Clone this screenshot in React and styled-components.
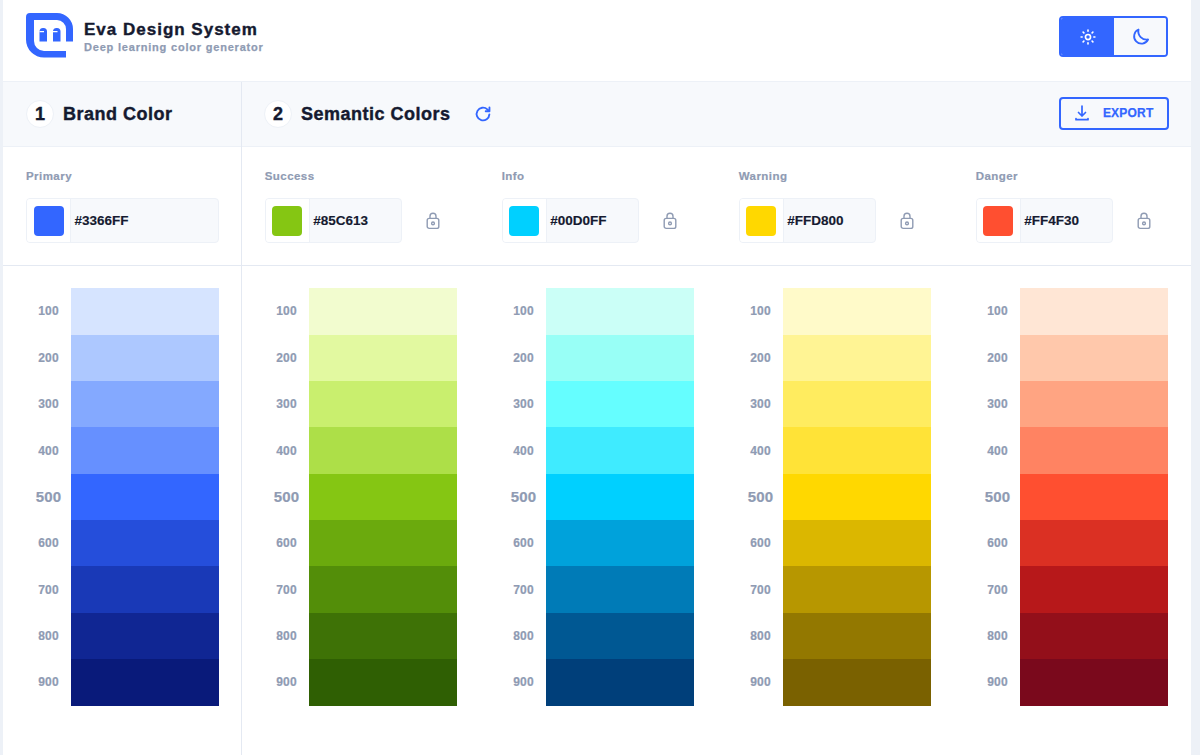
import React from 'react';
import styled, { createGlobalStyle } from 'styled-components';

const GlobalStyle = createGlobalStyle`
  html, body {
    margin: 0;
    padding: 0;
    background: #edf1f7;
    font-family: "Liberation Sans", Arial, sans-serif;
  }
  * { box-sizing: border-box; }
`;

const PALETTES = {
  Primary: {
    hex: '#3366FF',
    shades: ['#D6E4FF', '#ADC8FF', '#84A9FF', '#6690FF', '#3366FF', '#254EDB', '#1939B7', '#102693', '#091A7A'],
  },
  Success: {
    hex: '#85C613',
    shades: ['#F2FCCF', '#E2F9A0', '#C9EF6E', '#ADDF48', '#85C613', '#6BAA0D', '#538E09', '#3E7206', '#2F5F03'],
  },
  Info: {
    hex: '#00D0FF',
    shades: ['#CBFFF7', '#98FFF6', '#65FEFF', '#3FEBFF', '#00D0FF', '#00A2DB', '#007BB7', '#005893', '#003F7A'],
  },
  Warning: {
    hex: '#FFD800',
    shades: ['#FFFAC9', '#FFF494', '#FFEC5F', '#FFE337', '#FFD800', '#DBB700', '#B79700', '#937800', '#7A6100'],
  },
  Danger: {
    hex: '#FF4F30',
    shades: ['#FFE6D5', '#FFC8AB', '#FFA482', '#FF8362', '#FF4F30', '#DB3023', '#B7181A', '#930F1A', '#7A091C'],
  },
};

const SEMANTIC = ['Success', 'Info', 'Warning', 'Danger'];

const Page = styled.div`
  width: 1188px;
  height: 755px;
  margin-left: 3px;
  background: white;
  overflow: hidden;
`;

const Header = styled.header`
  height: 82px;
  padding: 13px 23px 0;
  display: flex;
  align-items: flex-start;
  justify-content: space-between;
  border-bottom: 1px solid #edf1f7;
`;

const Brand = styled.div`
  display: flex;
  align-items: flex-start;
  gap: 11px;
`;

const BrandText = styled.div`
  display: flex;
  flex-direction: column;
  padding-top: 6px;
`;

const Title = styled.div`
  font-size: 17px;
  font-weight: 700;
  color: #151a30;
  letter-spacing: 1px;
  line-height: 21px;
  -webkit-text-stroke: 0.4px #151a30;
`;

const Subtitle = styled.div`
  font-size: 11px;
  font-weight: 700;
  color: #8f9bb3;
  letter-spacing: 0.8px;
  line-height: 14px;
  -webkit-text-stroke: 0.25px #8f9bb3;
`;

const Toggle = styled.div`
  width: 109px;
  height: 41px;
  margin-top: 3px;
  display: flex;
  border: 2px solid #3366ff;
  border-radius: 4px;
  overflow: hidden;
  background: #f7f9fc;
`;

const ToggleButton = styled.div`
  flex: ${(p) => (p.$active ? '0 0 53px' : '1')};
  display: flex;
  align-items: center;
  justify-content: center;
  background: ${(p) => (p.$active ? '#3366ff' : '#f7f9fc')};
  color: ${(p) => (p.$active ? 'white' : '#3366ff')};
`;

const Columns = styled.div`
  display: grid;
  grid-template-columns: 239px 1fr;
`;

const Column = styled.section`
  min-height: 673px;
  border-right: ${(p) => (p.$divider ? '1px solid #e4e9f2' : 'none')};
`;

const SectionBar = styled.div`
  height: 65px;
  padding: ${(p) => (p.$inset ? '0 23px 0 22px' : '0 23px')};
  background: #f7f9fc;
  display: flex;
  align-items: center;
  border-bottom: 1px solid #edf1f7;
`;

const StepNumber = styled.div`
  width: 28px;
  height: 28px;
  border-radius: 50%;
  background: white;
  border: 1px solid #edf1f7;
  display: flex;
  align-items: center;
  justify-content: center;
  font-size: 18px;
  font-weight: 700;
  color: #151a30;
  -webkit-text-stroke: 0.4px #151a30;
`;

const SectionTitle = styled.h2`
  margin: 0 0 0 9px;
  font-size: 18px;
  font-weight: 700;
  color: #151a30;
  letter-spacing: 0.5px;
  -webkit-text-stroke: 0.4px #151a30;
`;

const RefreshButton = styled.div`
  margin-left: 23px;
  display: flex;
  color: #3366ff;
`;

const ExportButton = styled.div`
  margin: 0 0 2px auto;
  width: 110px;
  height: 33px;
  border: 2px solid #3366ff;
  border-radius: 4px;
  display: flex;
  align-items: center;
  justify-content: center;
  gap: 13px;
  color: #3366ff;
  font-size: 12px;
  font-weight: 700;
  letter-spacing: 0.2px;
  -webkit-text-stroke: 0.25px #3366ff;
`;

const InputRow = styled.div`
  height: 119px;
  padding: ${(p) => (p.$inset ? '0 23px 0 22.7px' : '0 23px')};
  border-bottom: 1px solid #e4e9f2;
  display: grid;
  grid-template-columns: ${(p) => (p.$inset ? 'repeat(4, 193px)' : '193px')};
  column-gap: 44px;
`;

const Field = styled.div`
  padding-top: 22px;
`;

const FieldLabel = styled.div`
  font-size: 11.5px;
  font-weight: 700;
  line-height: 14px;
  letter-spacing: 0.45px;
  color: #8f9bb3;
  margin-bottom: 15px;
  -webkit-text-stroke: 0.2px #8f9bb3;
`;

const FieldRow = styled.div`
  display: flex;
  align-items: center;
  justify-content: space-between;
`;

const ColorInput = styled.div`
  width: ${(p) => (p.$wide ? '193px' : '137px')};
  height: 45px;
  display: flex;
  border: 1px solid #edf1f7;
  border-radius: 4px;
  overflow: hidden;
  background: #f7f9fc;
`;

const SwatchWell = styled.div`
  flex: 0 0 44px;
  background: white;
  border-right: 1px solid #edf1f7;
  display: flex;
  align-items: center;
  justify-content: center;
`;

const Swatch = styled.div`
  width: 30px;
  height: 30px;
  border-radius: 4px;
  background: ${(p) => p.$color};
`;

const HexValue = styled.div`
  padding-left: 3.5px;
  display: flex;
  align-items: center;
  font-size: 13.5px;
  font-weight: 700;
  color: #151a30;
  -webkit-text-stroke: 0.15px #151a30;
`;

const LockButton = styled.div`
  display: flex;
  color: #8f9bb3;
  margin-right: 18px;
`;

const ScaleRow = styled.div`
  padding: 22.3px ${(p) => (p.$inset ? '23px 0 22px' : '23px 0')};
  display: grid;
  grid-template-columns: ${(p) => (p.$inset ? 'repeat(4, 193px)' : '193px')};
  column-gap: 44px;
`;

const Scale = styled.div`
  display: grid;
  grid-template-columns: 45px 148px;
  grid-auto-rows: 46.36px;
`;

const ShadeLabel = styled.div`
  display: flex;
  align-items: center;
  justify-content: center;
  font-weight: 700;
  color: #8f9bb3;
  font-size: ${(p) => (p.$main ? '15px' : '12px')};
  letter-spacing: 0.2px;
  -webkit-text-stroke: 0.2px #8f9bb3;
`;

const ShadeBlock = styled.div`
  background: ${(p) => p.$color};
`;

function SunIcon() {
  return (
    <svg width="18" height="18" viewBox="0 0 24 24" fill="none" stroke="currentColor" strokeWidth="2.2" strokeLinecap="round">
      <circle cx="12" cy="12" r="3.4" />
      <path d="M12 2.8v1.4M12 19.8v1.4M2.8 12h1.4M19.8 12h1.4M5.5 5.5l1 1M17.5 17.5l1 1M5.5 18.5l1-1M17.5 6.5l1-1" />
    </svg>
  );
}

function MoonIcon() {
  return (
    <svg width="19" height="19" viewBox="0 0 24 24" fill="none" stroke="currentColor" strokeWidth="2.3" strokeLinejoin="round">
      <path d="M9.5 3.2A9.3 9.3 0 1 0 21.6 15.8 10.5 10.5 0 0 1 9.5 3.2z" />
    </svg>
  );
}

function RefreshIcon() {
  return (
    <svg width="18" height="18" viewBox="0 0 24 24" fill="none" stroke="currentColor" strokeWidth="2.5" strokeLinecap="round" strokeLinejoin="round">
      <path d="M20.5 12.5a8.5 8.5 0 1 1-2.7-6.7L20 8" />
      <path d="M20.6 3.4v5h-5" />
    </svg>
  );
}

function DownloadIcon() {
  return (
    <svg width="16" height="18" viewBox="0 0 16 18" fill="none" stroke="currentColor" strokeWidth="1.7" strokeLinecap="round" strokeLinejoin="round">
      <path d="M8 2v10M4.5 8.5 8 12l3.5-3.5" />
      <path d="M2 14.5v1.2h12v-1.2" />
    </svg>
  );
}

function LockIcon() {
  return (
    <svg width="14" height="18" viewBox="0 0 14 18" fill="none" stroke="currentColor" strokeWidth="1.4">
      <rect x="1.2" y="6.4" width="11.6" height="10" rx="2" />
      <path d="M4 6.4V4.2a3 3 0 0 1 6 0v2.2" />
      <circle cx="7" cy="11.4" r="1.4" />
    </svg>
  );
}

function Logo() {
  return (
    <svg width="47" height="45" viewBox="0 0 47 45">
      <path
        fill="#3366FF"
        d="M4 0H31A16 16 0 0 1 47 16V28.5H40V16A9 9 0 0 0 31 7H8V28A10 10 0 0 0 18 38H40V44.5H18A18 18 0 0 1 0 26.5V4A4 4 0 0 1 4 0Z"
      />
      <path
        fill="#3366FF"
        d="M13.5 18A3.5 3.5 0 0 1 17 15H17.5A3.5 3.5 0 0 1 21 18.5V28.5H13.5ZM27 18A3.5 3.5 0 0 1 30.5 15H31A3.5 3.5 0 0 1 34.5 18.5V28.5H27Z"
      />
      <path fill="white" d="M13.5 18H18V19.3H13.5ZM27 18H31.5V19.3H27Z" />
    </svg>
  );
}

function ColorField({ name, wide }) {
  return (
    <Field>
      <FieldLabel>{name}</FieldLabel>
      <FieldRow>
        <ColorInput $wide={wide}>
          <SwatchWell>
            <Swatch $color={PALETTES[name].hex} />
          </SwatchWell>
          <HexValue>{PALETTES[name].hex}</HexValue>
        </ColorInput>
        {!wide && (
          <LockButton>
            <LockIcon />
          </LockButton>
        )}
      </FieldRow>
    </Field>
  );
}

function ShadeScale({ name }) {
  return (
    <Scale>
      {PALETTES[name].shades.map((color, i) => (
        <React.Fragment key={color}>
          <ShadeLabel $main={i === 4}>{(i + 1) * 100}</ShadeLabel>
          <ShadeBlock $color={color} />
        </React.Fragment>
      ))}
    </Scale>
  );
}

export default function App() {
  return (
    <>
      <GlobalStyle />
      <Page>
        <Header>
          <Brand>
            <Logo />
            <BrandText>
              <Title>Eva Design System</Title>
              <Subtitle>Deep learning color generator</Subtitle>
            </BrandText>
          </Brand>
          <Toggle>
            <ToggleButton $active>
              <SunIcon />
            </ToggleButton>
            <ToggleButton>
              <MoonIcon />
            </ToggleButton>
          </Toggle>
        </Header>
        <Columns>
          <Column $divider>
            <SectionBar>
              <StepNumber>1</StepNumber>
              <SectionTitle>Brand Color</SectionTitle>
            </SectionBar>
            <InputRow>
              <ColorField name="Primary" wide />
            </InputRow>
            <ScaleRow>
              <ShadeScale name="Primary" />
            </ScaleRow>
          </Column>
          <Column>
            <SectionBar $inset>
              <StepNumber>2</StepNumber>
              <SectionTitle>Semantic Colors</SectionTitle>
              <RefreshButton>
                <RefreshIcon />
              </RefreshButton>
              <ExportButton>
                <DownloadIcon />
                EXPORT
              </ExportButton>
            </SectionBar>
            <InputRow $inset>
              {SEMANTIC.map((name) => (
                <ColorField key={name} name={name} />
              ))}
            </InputRow>
            <ScaleRow $inset>
              {SEMANTIC.map((name) => (
                <ShadeScale key={name} name={name} />
              ))}
            </ScaleRow>
          </Column>
        </Columns>
      </Page>
    </>
  );
}
